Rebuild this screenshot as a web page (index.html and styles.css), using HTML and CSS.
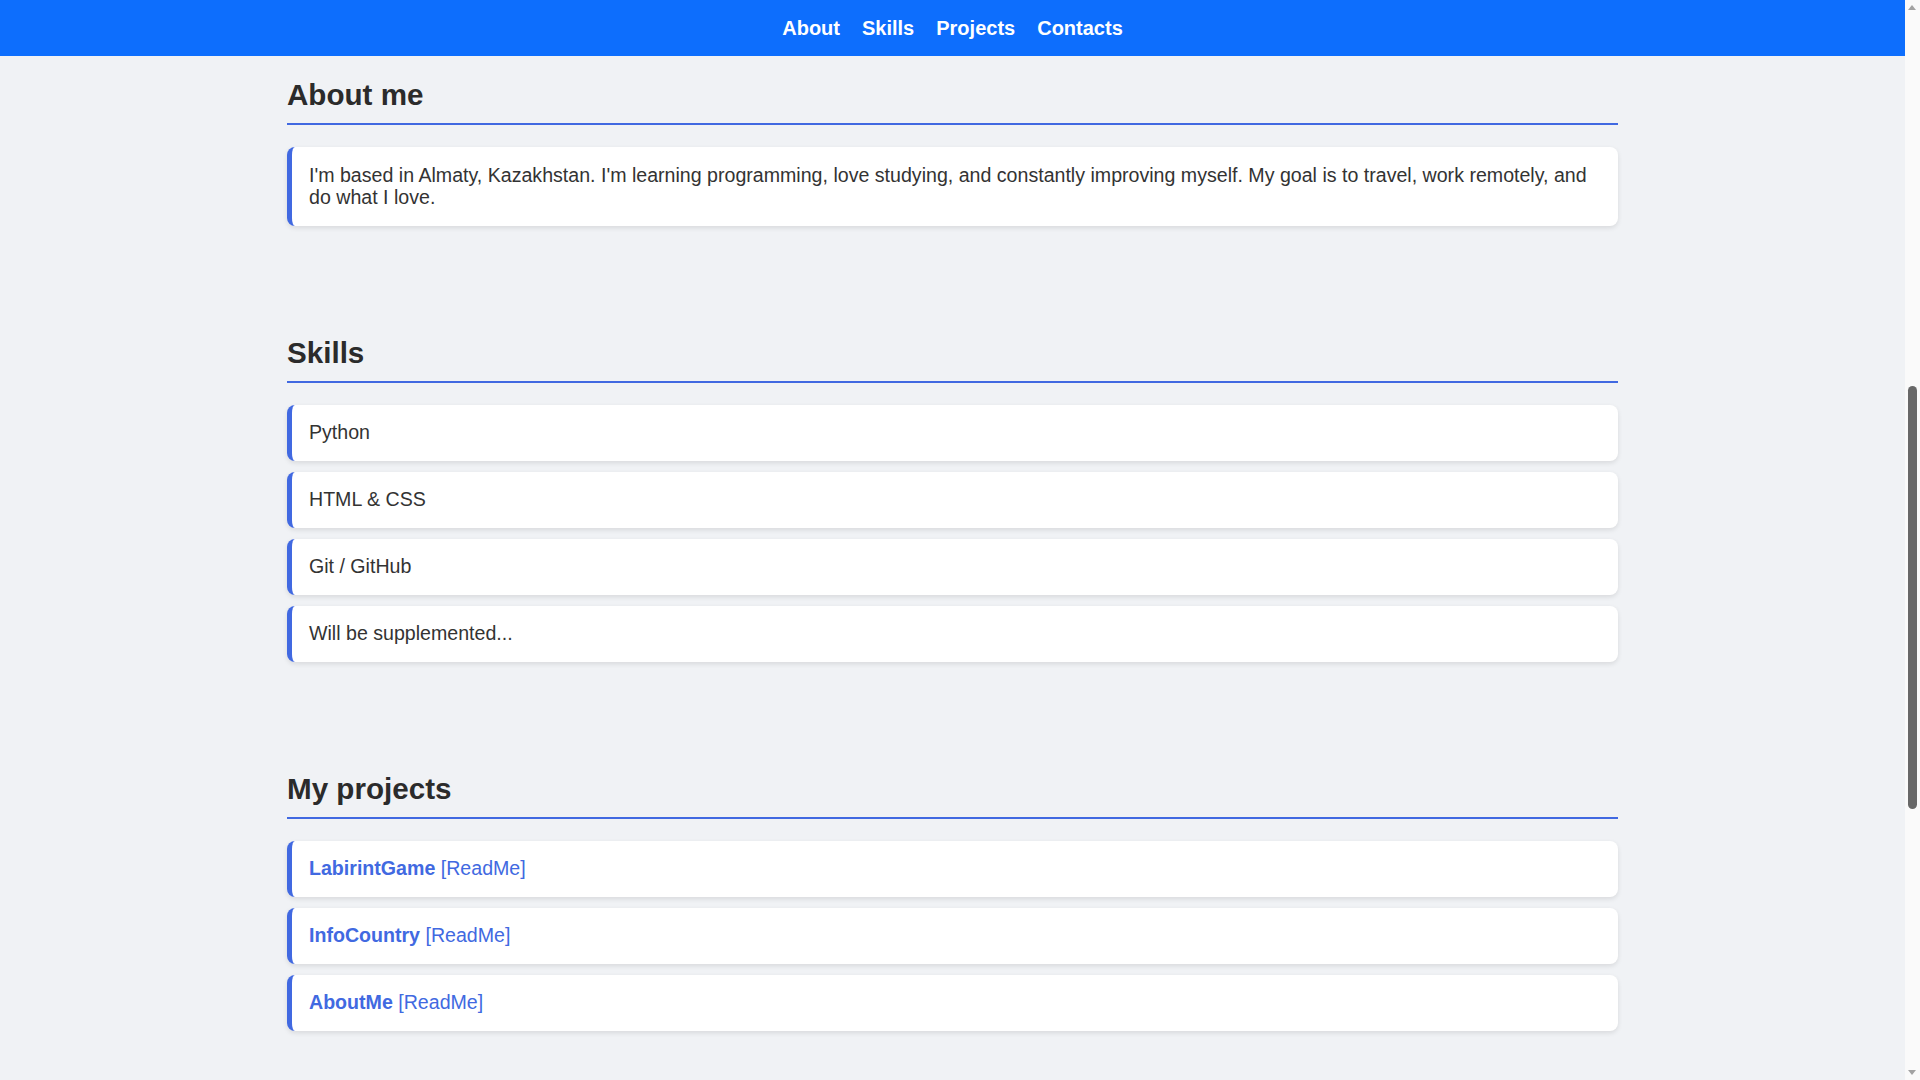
FILE: index.html
```html
<!DOCTYPE html>
<html lang="en">
<head>
<meta charset="utf-8">
<title>About me</title>
<link rel="stylesheet" href="styles.css">
</head>
<body>
<nav class="topnav">
  <a href="#about">About</a>
  <a href="#skills">Skills</a>
  <a href="#projects">Projects</a>
  <a href="#contacts">Contacts</a>
</nav>
<main class="container">
  <section class="section" id="about">
    <h2 class="section-title">About me</h2>
    <div class="card">I'm based in Almaty, Kazakhstan. I'm learning programming, love studying, and constantly improving myself. My goal is to travel, work remotely, and do what I love.</div>
  </section>
  <section class="section" id="skills">
    <h2 class="section-title">Skills</h2>
    <ul class="card-list">
      <li class="card">Python</li>
      <li class="card">HTML &amp; CSS</li>
      <li class="card">Git / GitHub</li>
      <li class="card">Will be supplemented...</li>
    </ul>
  </section>
  <section class="section" id="projects">
    <h2 class="section-title">My projects</h2>
    <ul class="card-list">
      <li class="card"><a class="proj" href="#">LabirintGame</a> <a class="readme" href="#">[ReadMe]</a></li>
      <li class="card"><a class="proj" href="#">InfoCountry</a> <a class="readme" href="#">[ReadMe]</a></li>
      <li class="card"><a class="proj" href="#">AboutMe</a> <a class="readme" href="#">[ReadMe]</a></li>
    </ul>
  </section>
</main>
<div class="scrollbar" aria-hidden="true">
  <span class="sb-arrow sb-up"></span>
  <span class="sb-thumb"></span>
  <span class="sb-arrow sb-down"></span>
</div>
</body>
</html>
```
FILE: styles.css
```css
html, body {
  margin: 0;
  padding: 0;
}
body {
  background: #f0f2f5;
  color: #333333;
  font-family: "Liberation Sans", Arial, sans-serif;
  margin-right: 15px;
}
.topnav {
  position: sticky;
  top: 0;
  height: 56px;
  background: #0d6efd;
  display: flex;
  justify-content: center;
  align-items: center;
  gap: 22px;
  z-index: 10;
}
.topnav a {
  color: #ffffff;
  text-decoration: none;
  font-weight: bold;
  font-size: 20px;
  line-height: 23px;
}
.container {
  width: 1331px;
  margin: 0 auto;
}
.section {
  padding-top: 22px;
  padding-bottom: 88px;
}
.section-title {
  margin: 0 0 22px 0;
  font-size: 29.6px;
  font-weight: bold;
  color: #2b2b2b;
  padding-bottom: 11px;
  border-bottom: 2px solid #4169e1;
  line-height: 34px;
}
.card-list {
  list-style: none;
  margin: 0;
  padding: 0;
  display: flex;
  flex-direction: column;
  gap: 11px;
}
.card {
  background: #ffffff;
  border-left: 5px solid #4169e1;
  border-radius: 8px;
  padding: 16.75px 17px;
  font-size: 19.6px;
  line-height: 22.5px;
  box-shadow: 0 2px 5px rgba(0, 0, 0, 0.1);
}
.proj {
  color: #4169e1;
  font-weight: bold;
  text-decoration: none;
}
.readme {
  color: #4169e1;
  text-decoration: none;
}

/* window scrollbar (page is scrolled) */
.scrollbar {
  position: fixed;
  top: 0;
  right: 0;
  width: 15px;
  height: 100vh;
  background: #fafafa;
  z-index: 20;
}
.sb-arrow {
  position: absolute;
  left: 3px;
  width: 0;
  height: 0;
  border-left: 4.5px solid transparent;
  border-right: 4.5px solid transparent;
}
.sb-up {
  top: 5px;
  border-bottom: 5px solid #a3a3a3;
}
.sb-down {
  bottom: 5px;
  border-top: 5px solid #a3a3a3;
}
.sb-thumb {
  position: absolute;
  left: 3px;
  top: 386px;
  width: 9px;
  height: 423px;
  background: #686868;
  border-radius: 5px;
}
```
